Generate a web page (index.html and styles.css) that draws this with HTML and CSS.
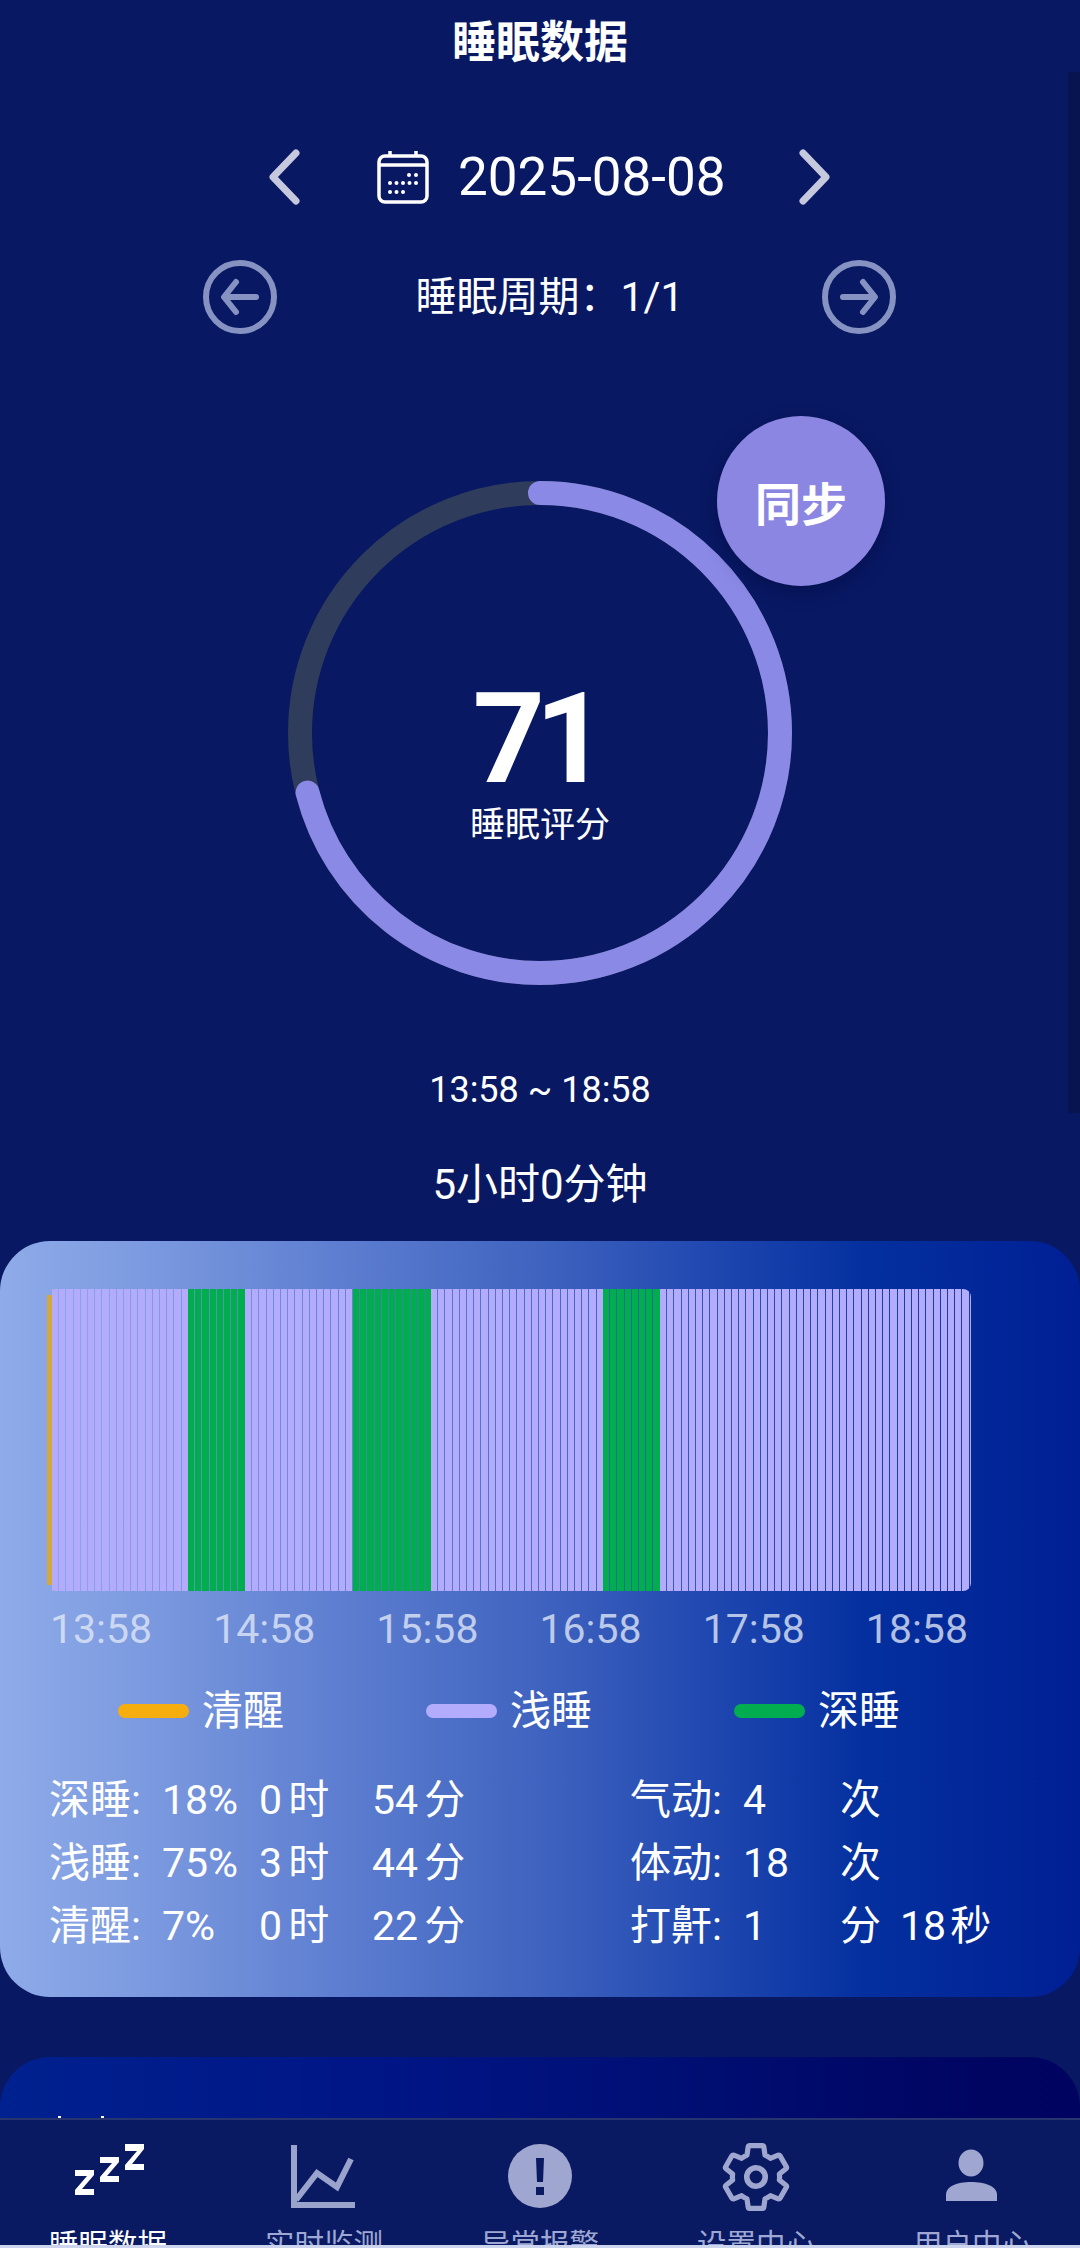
FILE: index.html
```html
<!DOCTYPE html>
<html lang="zh-CN">
<head>
<meta charset="utf-8">
<title>睡眠数据</title>
<link rel="stylesheet" href="styles.css">
</head>
<body>
<div class="page">
  <main class="content">
    <h1 class="title">睡眠数据</h1>

    <div class="date-row">
      <svg class="chev" viewBox="0 0 34 56"><path d="M29 4 6 28l23 24" /></svg>
      <svg class="cal" viewBox="0 0 52 54">
        <rect x="2" y="6" width="48" height="46" rx="6" class="cal-line"/>
        <path d="M2 15h48M13 1v6M39 1v6" class="cal-line"/>
        <g class="cal-dots">
          <circle cx="32" cy="25" r="2"/><circle cx="39" cy="25" r="2"/>
          <circle cx="13" cy="33" r="2"/><circle cx="19.500" cy="33" r="2"/><circle cx="26" cy="33" r="2"/><circle cx="32.500" cy="33" r="2"/><circle cx="39" cy="33" r="2"/>
          <circle cx="13" cy="42" r="2"/><circle cx="19.500" cy="42" r="2"/><circle cx="26" cy="42" r="2"/>
        </g>
      </svg>
      <span class="date">2025-08-08</span>
      <svg class="chev" viewBox="0 0 34 56"><path d="M5 4l23 24L5 52" /></svg>
    </div>

    <div class="period-row">
      <svg class="circ" viewBox="0 0 74 74"><circle cx="37" cy="37" r="34"/><path d="M53 37H22M33 22 21 37l12 15"/></svg>
      <span class="period">睡眠周期：1/1</span>
      <svg class="circ" viewBox="0 0 74 74"><circle cx="37" cy="37" r="34"/><path d="M21 37h31M41 22l12 15-12 15"/></svg>
    </div>

    <div class="score">
      <svg class="ring" viewBox="0 0 504 504">
        <circle class="ring-track" cx="252" cy="252" r="240"/>
        <circle class="ring-value" cx="252" cy="252" r="240" pathLength="100" transform="rotate(-90 252 252)"/>
      </svg>
      <div class="score-text">
        <span class="score-num">71</span>
        <span class="score-label">睡眠评分</span>
      </div>
      <button class="sync">同步</button>
    </div>

    <p class="range">13:58 ~ 18:58</p>
    <p class="duration">5小时0分钟</p>

    <section class="card">
      <div class="chart">
        <div class="seg awake"></div>
        <div class="seg light s1"></div>
        <div class="seg deep s2"></div>
        <div class="seg light s3"></div>
        <div class="seg deep s4"></div>
        <div class="seg light s5"></div>
        <div class="seg deep s6"></div>
        <div class="seg light s7"></div>
      </div>
      <div class="axis">
        <span>13:58</span><span>14:58</span><span>15:58</span><span>16:58</span><span>17:58</span><span>18:58</span>
      </div>
      <div class="legend">
        <div class="legend-item"><i class="swatch sw-awake"></i>清醒</div>
        <div class="legend-item"><i class="swatch sw-light"></i>浅睡</div>
        <div class="legend-item"><i class="swatch sw-deep"></i>深睡</div>
      </div>
      <div class="stats">
        <div class="stat-table left">
          <span>深睡:</span><span>18%</span><span>0 时</span><span>54 分</span>
          <span>浅睡:</span><span>75%</span><span>3 时</span><span>44 分</span>
          <span>清醒:</span><span>7%</span><span>0 时</span><span>22 分</span>
        </div>
        <div class="stat-table right">
          <span>气动:</span><span>4</span><span>次</span><span></span>
          <span>体动:</span><span>18</span><span>次</span><span></span>
          <span>打鼾:</span><span>1</span><span>分</span><span>18 秒</span>
        </div>
      </div>
    </section>

    <section class="card-next">
      <i class="speck sp1"></i><i class="speck sp2"></i>
    </section>
  </main>

  <div class="scrollbar"></div>

  <nav class="nav">
    <div class="tab active">
      <svg class="tab-icon" viewBox="0 0 90 70">
        <path class="zz" d="M12 30h19v5L19 49h12v6H12v-5l12-14H12zM37 17h19v5L44 36h12v6H37v-5l12-14H37zM62 4h19v5L69 24h12v6H62v-5l12-14H62z"/>
      </svg>
      <span>睡眠数据</span>
    </div>
    <div class="tab">
      <svg class="tab-icon" viewBox="0 0 90 70">
        <path class="line-icon" d="M15 5v60h61M17 60l21-27 20 14 14-28"/>
      </svg>
      <span>实时监测</span>
    </div>
    <div class="tab">
      <svg class="tab-icon" viewBox="0 0 90 70">
        <circle class="solid" cx="45" cy="36" r="32"/>
        <path class="bang" d="M41 18h8l-1 24h-6zM41 47h8v8h-8z"/>
      </svg>
      <span>异常报警</span>
    </div>
    <div class="tab">
      <svg class="tab-icon gear" viewBox="0 0 24 24">
        <g transform="translate(12 12) scale(.92) translate(-12 -12)">
          <path class="gear-line" d="M19.430 12.980c.04-.32.07-.64.07-.98 0-.34-.03-.66-.07-.98l2.110-1.650c.19-.15.24-.42.12-.64l-2-3.460c-.09-.16-.26-.25-.44-.25-.06 0-.12.01-.17.03l-2.490 1c-.52-.4-1.080-.73-1.690-.98l-.38-2.650C14.460 2.180 14.250 2 14 2h-4c-.25 0-.46.18-.49.42l-.38 2.650c-.61.25-1.170.59-1.690.98l-2.490-1c-.06-.02-.12-.03-.18-.03-.17 0-.34.09-.43.25l-2 3.460c-.13.22-.07.49.12.64l2.110 1.650c-.04.32-.07.65-.07.98 0 .33.03.66.07.98l-2.110 1.650c-.19.15-.24.42-.12.64l2 3.460c.09.16.26.25.44.25.06 0 .12-.01.17-.03l2.490-1c.52.4 1.080.73 1.690.98l.38 2.650c.03.24.24.42.49.42h4c.25 0 .46-.18.49-.42l.38-2.650c.61-.25 1.170-.59 1.690-.98l2.490 1c.06.02.12.03.18.03.17 0 .34-.09.43-.25l2-3.460c.12-.22.07-.49-.12-.64l-2.110-1.650z"/>
        </g>
        <circle class="gear-line" cx="12" cy="12" r="2.700"/>
      </svg>
      <span>设置中心</span>
    </div>
    <div class="tab">
      <svg class="tab-icon" viewBox="0 0 90 70">
        <ellipse class="solid" cx="44" cy="23" rx="12.500" ry="13.500"/>
        <path class="solid" d="M19 61v-6c0-9 11-13 25-13s26 4 26 13v6z"/>
      </svg>
      <span>用户中心</span>
    </div>
  </nav>
  <div class="home-strip"></div>
</div>
</body>
</html>
```

FILE: styles.css
```css
* { box-sizing: border-box; }
html, body { margin: 0; padding: 0; }
body {
  width: 1080px;
  height: 2248px;
  overflow: hidden;
  background: #081862;
  color: #fff;
  font-family: Roboto, "Noto Sans CJK SC", sans-serif;
}
.page {
  position: relative;
  height: 2248px;
  display: flex;
  flex-direction: column;
}
.content {
  height: 2118px;
  overflow: hidden;
  display: flex;
  flex-direction: column;
  flex: none;
}
.title {
  margin: 3px 0 0;
  height: 80px;
  line-height: 80px;
  font-size: 44px;
  font-weight: 700;
  text-align: center;
}

.date-row {
  margin-top: 66px;
  height: 80px;
  padding-left: 267px;
  display: flex;
  align-items: center;
}
.chev { width: 34px; height: 56px; fill: none; stroke: #c6c9de; stroke-width: 7; stroke-linecap: round; stroke-linejoin: round; }
.cal { width: 52px; height: 54px; margin-left: 76px; }
.cal-line { fill: none; stroke: #fff; stroke-width: 3.500; }
.cal-dots { fill: #fff; }
.date { font-size: 53px; width: 265px; margin: 0 75px 0 29px; white-space: nowrap; line-height: 1; }

.period-row {
  margin: 55px 184px 0 203px;
  height: 74px;
  display: flex;
  align-items: center;
  justify-content: space-between;
}
.circ { width: 74px; height: 74px; fill: none; stroke: #8693c2; stroke-width: 6; stroke-linecap: round; stroke-linejoin: round; }
.period { font-size: 41px; line-height: 1; white-space: nowrap; }

.score {
  position: relative;
  margin: 147px auto 0;
  width: 504px;
  height: 504px;
  display: grid;
}
.ring { grid-area: 1 / 1; width: 504px; height: 504px; fill: none; }
.ring-track { stroke: #2f3c5c; stroke-width: 24; }
.ring-value { stroke: #8a89e5; stroke-width: 24; stroke-linecap: round; stroke-dasharray: 71 100; }
.score-text {
  grid-area: 1 / 1;
  display: flex;
  flex-direction: column;
  align-items: center;
  padding-top: 205px;
}
.score-num { font-size: 126px; font-weight: 700; line-height: 106px; height: 106px; letter-spacing: -10px; margin-left: -10px; }
.score-label { font-size: 35px; line-height: 50px; margin-top: 9px; }
.sync {
  position: absolute;
  left: 429px;
  top: -65px;
  width: 168px;
  height: 170px;
  border: 0;
  border-radius: 50%;
  padding: 0;
  background: #8b86e2;
  box-shadow: 0 6px 16px rgba(4, 12, 70, .55);
  color: #fff;
  font: 700 46px Roboto, "Noto Sans CJK SC", sans-serif;
}

.range { margin: 80px 0 0; height: 50px; line-height: 50px; font-size: 36px; text-align: center; }
.duration { margin: 45px 0 0; height: 50px; line-height: 50px; font-size: 42px; text-align: center; }

.card {
  margin-top: 31px;
  height: 756px;
  flex: none;
  border-radius: 50px;
  padding: 48px 109px 0 47px;
  background: linear-gradient(90deg, #8fabe9 0%, #7b99df 14%, #5c7dd0 32%, #3f63bf 50%, #1f47b0 66%, #04309f 80%, #001f94 100%);
}
.chart {
  height: 302px;
  display: flex;
  border-radius: 8px;
  overflow: hidden;
}
.seg { height: 100%; flex: none; }
.light { background: repeating-linear-gradient(90deg, #b3acfc 0 6.200px, rgba(179, 172, 252, .12) 6.200px 7.200px); }
.deep { background: repeating-linear-gradient(90deg, #02ad4f 0 6.200px, rgba(2, 173, 79, .3) 6.200px 7.200px); }
.awake { width: 5px; margin: 6px 0; height: auto; background: #d3a93f; }
.s1 { width: 136px; }
.s2 { width: 57px; }
.s3 { width: 108px; }
.s4 { width: 78px; }
.s5 { width: 172px; }
.s6 { width: 57px; }
.s7 { flex: 1; }

.axis {
  margin: 13px 3px 0 3px;
  display: flex;
  justify-content: space-between;
  font-size: 41px;
  line-height: 50px;
  color: rgba(226, 233, 248, .78);
}
.legend {
  margin: 32px -90px 0 71px;
  display: flex;
}
.legend-item {
  width: 308px;
  flex: none;
  display: flex;
  align-items: center;
  font-size: 41px;
  line-height: 50px;
}
.swatch { width: 71px; height: 14px; border-radius: 7px; margin-right: 13px; }
.sw-awake { background: #f6ae0e; }
.sw-light { background: #b3acfc; }
.sw-deep { background: #02ad4f; }

.stats {
  margin: 30px -90px 0 2px;
  display: flex;
}
.stat-table {
  display: grid;
  grid-auto-rows: 63px;
  align-items: baseline;
  font-size: 41px;
  white-space: nowrap;
}
.stat-table.left { grid-template-columns: 113px 97px 113px 1fr; width: 581px; word-spacing: -4px; }
.stat-table.right { grid-template-columns: 113px 97px 60px 1fr; word-spacing: -6px; }

.card-next {
  position: relative;
  margin-top: 60px;
  height: 200px;
  flex: none;
  border-radius: 50px;
  background: linear-gradient(90deg, #00218f 0%, #001586 35%, #000e72 65%, #000664 85%, #000460 100%);
}
.speck { position: absolute; top: 59px; width: 3px; height: 3px; background: #fff; }
.sp1 { left: 58px; }
.sp2 { left: 101px; }

.scrollbar {
  position: absolute;
  top: 72px;
  right: 0;
  width: 12px;
  height: 1041px;
  background: #07144f;
}

.nav {
  height: 127px;
  flex: none;
  overflow: hidden;
  display: flex;
  border-top: 2px solid #26356f;
  background: #0a1a62;
}
.tab {
  width: 216px;
  display: flex;
  flex-direction: column;
  align-items: center;
  font-size: 29.500px;
  line-height: 40px;
  color: #9fa8d4;
}
.tab.active { color: #fff; }
.tab-icon { width: 90px; height: 70px; margin-top: 20px; flex: none; }
.tab-icon.gear { width: 82px; height: 82px; margin: 16px 0 -8px; }
.tab span { margin-top: 15px; white-space: nowrap; }
.zz { fill: #fff; }
.line-icon { fill: none; stroke: #9aa3cc; stroke-width: 6; }
.solid { fill: #9fa6cf; }
.gear-line { fill: none; stroke: #9fa6cf; stroke-width: 1.650; stroke-linejoin: round; }
.bang { fill: #0a1a62; }
.home-strip { height: 3px; flex: none; background: #cdd5ee; }
```
